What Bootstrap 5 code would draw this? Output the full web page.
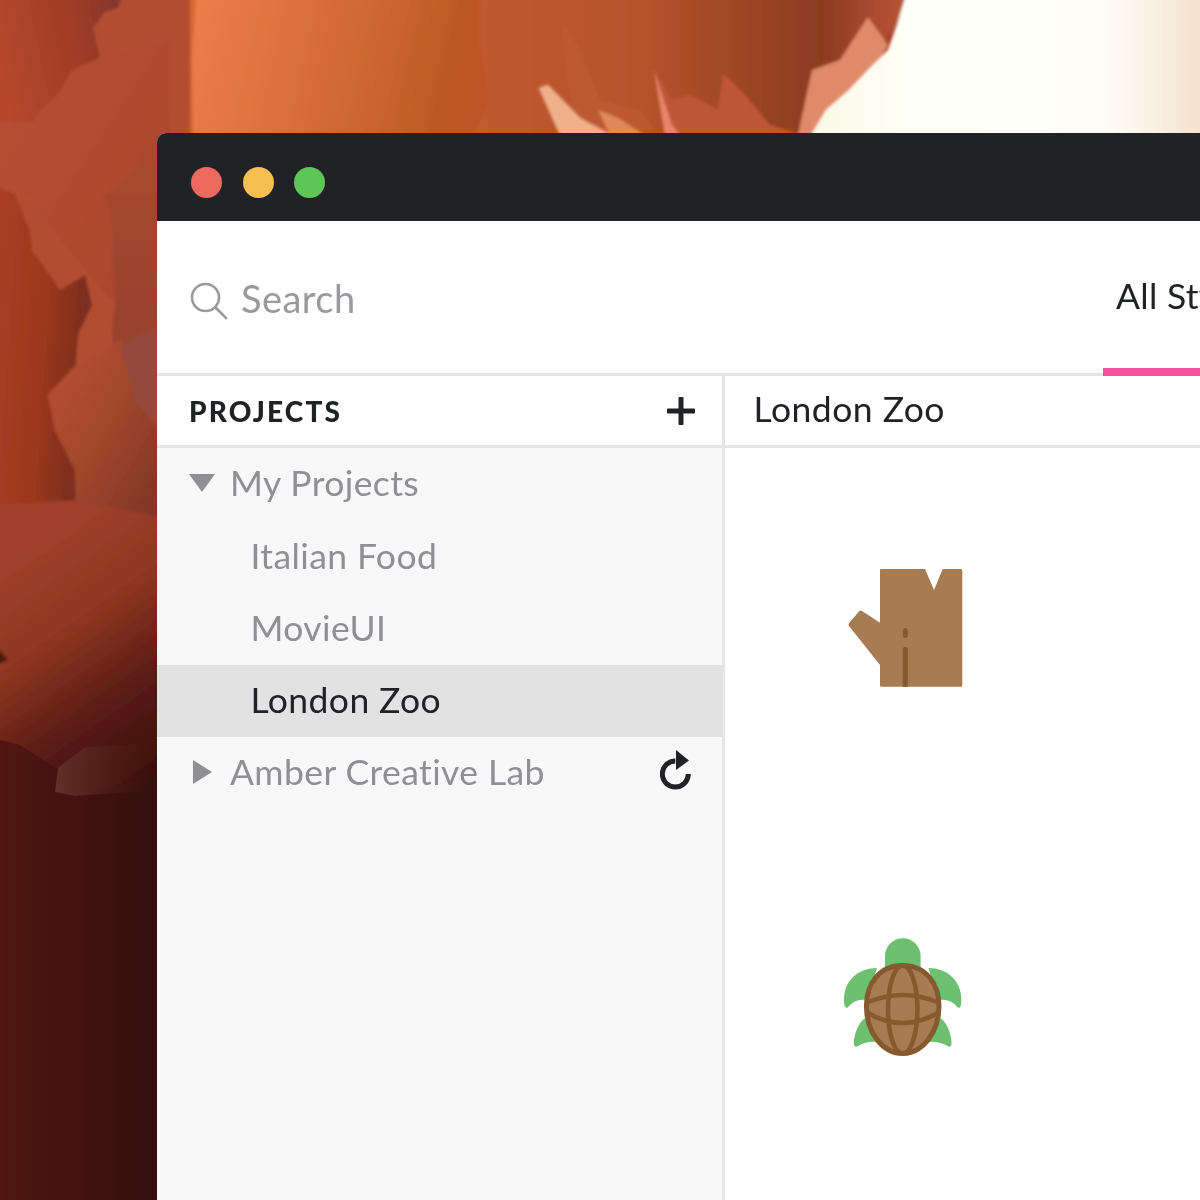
<!doctype html>
<html lang="en">
<head>
<meta charset="utf-8">
<title>Projects</title>
<link href="https://cdn.jsdelivr.net/npm/bootstrap@5.3.0/dist/css/bootstrap.min.css" rel="stylesheet">
<style>
html,body{height:1200px;overflow:hidden}
body{background:#3a0f0c;font-family:"Lato","Noto Sans",sans-serif;color:#212226;position:relative}
.art{position:absolute;left:0;top:0;width:1200px;height:1200px}
.app-window{position:relative;margin:133px 0 0 157px;width:1043px;height:1067px;background:#fff;border-radius:9px 0 0 0;overflow:hidden}
.title-strip{height:88px;background:#212226;padding:10px 0 0 34px;gap:20.6px}
.light{width:31px;height:31px;border-radius:50%}
.light-r{background:#ee6a5f}.light-y{background:#f6bf4f}.light-g{background:#5cc754}
.top-strip{height:155px;border-bottom:3px solid #e5e5e5}
.search-area{width:946px;flex:none;padding:3px 0 0 33px;gap:13px;color:#9a9a9e;font-size:38px;letter-spacing:.45px}
.search-glyph{margin-top:4px}
.all-tab{flex:none;width:200px;height:155px;padding:51px 0 0 13px;font-size:35.5px;letter-spacing:.3px;line-height:48px;white-space:nowrap;border-bottom:8px solid #f0509f}
.side-pane{width:568px;flex:none;border-right:3px solid #e5e5e5;height:824px;background:#f8f8f8}
.side-head{height:72px;background:#fff;border-bottom:3px solid #e5e5e5;padding:0 27px 0 32px;font-size:28px;font-weight:900;letter-spacing:2.15px;line-height:1}
.tree-row{height:72.2px;font-size:35.5px;letter-spacing:.4px;color:#8f8f94;line-height:1;padding-bottom:2px}
.tree-lead{width:73px;flex:none;padding-left:32px}
.tree-kid{padding-left:93.500px}
.tree-on{background:#e2e2e2;color:#212226}
.main-pane{flex:1;min-width:0}
.main-head{height:72px;border-bottom:3px solid #e5e5e5;padding:0 0 4px 28.500px;font-size:35.500px;letter-spacing:.48px;line-height:1}
.icon-column{padding:120px 0 0 118px;gap:250px}
.tri{display:block}
.reload{margin-left:auto;margin-right:30px;margin-top:-3px}
</style>
</head>
<body>
<svg class="art" viewBox="0 0 1200 1200" aria-hidden="true">
<defs>
<linearGradient id="top1" x1="0" y1="0" x2="1" y2=".1"><stop offset="0" stop-color="#ee7d4d"/><stop offset=".25" stop-color="#df7440"/><stop offset=".6" stop-color="#cc6530"/><stop offset=".85" stop-color="#bc5722"/><stop offset="1" stop-color="#c05328"/></linearGradient>
<linearGradient id="top2" x1="0" y1="0" x2="1" y2="0"><stop offset="0" stop-color="#c25a2e"/><stop offset=".4" stop-color="#b5522c"/><stop offset=".62" stop-color="#9c4622"/><stop offset=".8" stop-color="#8a3b1f"/><stop offset=".9" stop-color="#a64830"/><stop offset="1" stop-color="#b85634"/></linearGradient>
<linearGradient id="cream" x1="0" y1="0" x2="1" y2="0"><stop offset="0" stop-color="#fbf8e4"/><stop offset=".25" stop-color="#fffff8"/><stop offset=".75" stop-color="#fffdf8"/><stop offset=".92" stop-color="#f7ead9"/><stop offset="1" stop-color="#f3e0cb"/></linearGradient>
<linearGradient id="dk" x1="0" y1=".3" x2="1" y2=".1"><stop offset="0" stop-color="#b5472c"/><stop offset=".6" stop-color="#a03c26"/><stop offset="1" stop-color="#82352b"/></linearGradient>
<linearGradient id="mid" x1="0" y1="0" x2="1" y2="1"><stop offset="0" stop-color="#ba4f33"/><stop offset="1" stop-color="#a8452c"/></linearGradient>
<linearGradient id="col" x1="0" y1="0" x2="0" y2="1"><stop offset="0" stop-color="#ab4a2d"/><stop offset=".55" stop-color="#9a422d"/><stop offset="1" stop-color="#8f4838"/></linearGradient>
<linearGradient id="pk" x1="0" y1="0" x2="1" y2=".25"><stop offset="0" stop-color="#aa3e24"/><stop offset=".55" stop-color="#9c381c"/><stop offset="1" stop-color="#7a2c20"/></linearGradient>
<linearGradient id="lo" x1="0" y1="0" x2="1" y2=".9"><stop offset="0" stop-color="#bb5036"/><stop offset=".45" stop-color="#a4482c"/><stop offset="1" stop-color="#7a3324"/></linearGradient>
<linearGradient id="fall" gradientUnits="userSpaceOnUse" x1="10" y1="560" x2="157" y2="770"><stop offset="0" stop-color="#a0402a"/><stop offset=".35" stop-color="#8e3620"/><stop offset=".7" stop-color="#581a13"/><stop offset="1" stop-color="#3c100e"/></linearGradient>
<linearGradient id="deep" x1="0" y1="0" x2="1" y2="0"><stop offset="0" stop-color="#501610"/><stop offset="1" stop-color="#340f0e"/></linearGradient>
<linearGradient id="haze" x1="0" y1="0" x2="1" y2="0"><stop offset="0" stop-color="#65302a"/><stop offset="1" stop-color="#4a1a14" stop-opacity="0"/></linearGradient>
<filter id="sf"><feGaussianBlur stdDeviation="1.5"/></filter>
</defs>
<rect width="1200" height="1200" fill="#a8452a"/>
<g filter="url(#sf)">
<rect x="-5" y="-5" width="210" height="520" fill="#b34e30"/>
<polygon points="-5,122 33,122 43,108 58,95 72,70 100,58 170,40 170,240 110,300 60,240 30,195 -5,195" fill="url(#mid)"/>
<polygon points="105,195 125,180 157,130 170,130 170,470 125,400 112,335 115,300 112,225" fill="url(#col)"/>
<polygon points="-5,-5 123,-5 118,8 105,12 93,28 100,58 72,70 58,95 43,108 33,122 -5,122" fill="url(#dk)"/>
<polygon points="-5,185 15,195 30,230 32,250 60,290 85,275 92,305 78,335 76,365 48,395 55,430 75,470 76,505 -5,525" fill="url(#pk)"/>
<polygon points="48,395 76,365 120,340 140,360 160,345 170,345 170,530 76,520 75,470 55,430" fill="url(#lo)"/>
<polygon points="120,345 170,320 170,445 135,400" fill="#94493a"/>
<polygon points="-5,505 76,500 170,520 170,800 -5,800" fill="url(#fall)"/>
<polygon points="-5,645 8,660 0,663 -5,664" fill="#4a1a10"/>
<!-- top band -->
<rect x="190" y="-5" width="320" height="150" fill="#d8682f"/>
<polygon points="196,-5 520,-5 520,140 194,140 192,60" fill="url(#top1)"/>
<polygon points="480,-5 910,-5 830,140 470,140 490,100 478,40" fill="url(#top2)"/>
<polygon points="562,20 580,50 600,100 640,110 655,130 575,135 565,60" fill="#bf5c34" opacity=".7"/>
<polygon points="654,70 672,100 690,95 718,110 723,73 745,95 770,125 803,135 672,135" fill="#bf5634"/>
<polygon points="654,70 672,125 680,135 665,135" fill="#e6866a"/>
<polygon points="539,88 548,85 580,118 612,135 560,135" fill="#f0b089"/>
<polygon points="598,110 618,118 645,135 610,135" fill="#df8a58"/>
<polygon points="868,17 888,45 872,72 840,100 815,135 798,135 812,70 840,60" fill="#e08a6a"/>
<polygon points="906,-5 1205,-5 1205,140 808,140 826,110 849,90 870,68 888,50 895,30" fill="url(#cream)"/>
</g>
<polygon points="0,740 20,745 55,768 68,772 55,792 75,796 157,775 157,1200 0,1200" fill="url(#deep)"/>
<polygon points="58,768 85,747 130,745 157,742 157,790 75,796 55,792" fill="url(#haze)"/>
</svg>
<div class="app-window d-flex flex-column">
  <div class="title-strip d-flex align-items-center flex-shrink-0">
    <span class="light light-r"></span><span class="light light-y"></span><span class="light light-g"></span>
  </div>
  <div class="top-strip d-flex flex-shrink-0">
    <div class="search-area d-flex align-items-center">
      <svg class="search-glyph" width="38" height="38" viewBox="0 0 38 38" fill="none" stroke="#9a9a9e" stroke-width="2.6"><circle cx="15.500" cy="15.500" r="13.500"/><path d="M25.500 25.500 36 36" stroke-linecap="round"/></svg>
      <span>Search</span>
    </div>
    <div class="all-tab">All Styles</div>
  </div>
  <div class="d-flex flex-grow-1">
    <div class="side-pane">
      <div class="side-head d-flex align-items-center justify-content-between">
        <span>PROJECTS</span>
        <svg width="28" height="28" viewBox="0 0 28 28" fill="#212226"><rect x="11.500" y="0" width="5" height="28" rx="1"/><rect x="0" y="11.500" width="28" height="5" rx="1"/></svg>
      </div>
      <div class="tree-row d-flex align-items-center">
        <span class="tree-lead"><svg class="tri" width="26" height="18" viewBox="0 0 26 18" fill="#8f8f94"><polygon points="0,0 26,0 13,18"/></svg></span>
        <span>My Projects</span>
      </div>
      <div class="tree-row tree-kid d-flex align-items-center">Italian Food</div>
      <div class="tree-row tree-kid d-flex align-items-center">MovieUI</div>
      <div class="tree-row tree-kid tree-on d-flex align-items-center">London Zoo</div>
      <div class="tree-row d-flex align-items-center">
        <span class="tree-lead"><svg class="tri ms-1" width="19" height="24" viewBox="0 0 19 24" fill="#8f8f94"><polygon points="0,0 19,12 0,24"/></svg></span>
        <span>Amber Creative Lab</span>
        <svg class="reload" width="32" height="40" viewBox="0 0 32 40" fill="none"><path d="M28.300 24A13 13 0 1 1 15.300 11" stroke="#212226" stroke-width="5"/><polygon points="16,0 29,10.500 16,20" fill="#212226"/></svg>
      </div>
    </div>
    <div class="main-pane">
      <div class="main-head d-flex align-items-center">London Zoo</div>
      <div class="icon-column d-flex flex-column align-items-start">
        <svg width="120" height="120" viewBox="0 0 120 120">
          <path d="M38 1H82L91 22 99.700 1H117.800Q119.300 1 119.300 2.500V117.200Q119.300 118.700 117.800 118.700H38.500Q37 118.700 37 117.200V97L6 58Q5 56 6.500 54.500L16 43.500Q17.500 42 19 43L37 54.700V2Q37 1 38 1Z" fill="#a87c52"/>
          <rect x="59.800" y="60" width="5" height="10" rx="2.500" fill="#87592f"/>
          <path d="M59.800 81.200a2.500 2.500 0 0 1 5 0V118.700H59.800Z" fill="#87592f"/>
        </svg>
        <svg width="120" height="120" viewBox="0 0 120 120">
          <path d="M42 32V18a17.800 17.800 0 0 1 35.600 0V32Z" fill="#6cc070"/>
          <path d="M34 30C16 30 1 42 1 62Q1 70 4 70Q12 60 24 62Z" fill="#6cc070"/>
          <path d="M85.400 30C103.400 30 118.400 42 118.400 62Q118.400 70 115.400 70Q107.400 60 95.400 62Z" fill="#6cc070"/>
          <path d="M22 80C14 86 10 100 11 107Q12 110 15 108Q24 103 34 104Z" fill="#6cc070"/>
          <path d="M97.400 80C105.400 86 109.400 100 108.400 107Q107.400 110 104.400 108Q95.400 103 85.400 104Z" fill="#6cc070"/>
          <path d="M59.700 27.500C83 27.500 96 46 96 68 96 95 79 115.500 59.700 115.500 40 115.500 23.400 95 23.400 68 23.400 46 36 27.500 59.700 27.500Z" fill="#a87c52" stroke="#87592f" stroke-width="5"/>
          <g fill="none" stroke="#87592f" stroke-width="4.600"><ellipse cx="59.700" cy="71.500" rx="14.700" ry="44"/><path d="M23 65Q59.700 49 96.500 65"/><path d="M23 74Q59.700 96 96.500 74"/></g>
        </svg>
      </div>
    </div>
  </div>
</div>
<script src="https://cdn.jsdelivr.net/npm/bootstrap@5.3.0/dist/js/bootstrap.bundle.min.js"></script>
</body>
</html>
